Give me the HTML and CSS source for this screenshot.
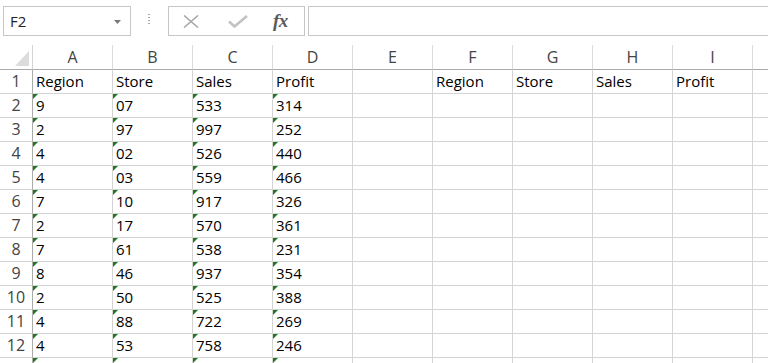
FILE: index.html
```html
<!DOCTYPE html>
<html>
<head>
<meta charset="utf-8">
<link rel="stylesheet" href="styles.css">
</head>
<body>
<div class="toolbar">
  <div class="namebox">
    <span class="name">F2</span>
    <svg class="dd" width="7" height="4" viewBox="0 0 7 4"><polygon points="0,0 7,0 3.5,4" fill="#7a7a7a"/></svg>
  </div>
  <div class="handle"></div>
  <div class="fxbox">
    <svg class="ico-x" width="16" height="13" viewBox="0 0 16 13"><path d="M1 0.5 L15 12.5 M15 0.5 L1 12.5" stroke="#a9a9a9" stroke-width="1.6" fill="none"/></svg>
    <svg class="ico-ok" width="20" height="13" viewBox="0 0 20 13"><path d="M1 6.5 L6.5 11.5 L19 1" stroke="#c2c2c2" stroke-width="2.6" fill="none"/></svg>
    <span class="fx">fx</span>
  </div>
  <div class="formula"></div>
</div>
<div class="sheet" id="sheet">
  <div class="corner"><svg width="14" height="15" viewBox="0 0 14 15"><polygon points="14,0 14,15 0,15" fill="#dcdcdc"/></svg></div>
  <div class="ch">A</div><div class="ch">B</div><div class="ch">C</div><div class="ch">D</div><div class="ch">E</div><div class="ch">F</div><div class="ch">G</div><div class="ch">H</div><div class="ch">I</div><div class="ch"></div>

  <div class="rh">1</div><div class="c">Region</div><div class="c">Store</div><div class="c">Sales</div><div class="c">Profit</div><div class="c"></div><div class="c">Region</div><div class="c">Store</div><div class="c">Sales</div><div class="c">Profit</div><div class="c"></div>

  <div class="rh">2</div><div class="c t">9</div><div class="c t">07</div><div class="c t">533</div><div class="c t">314</div><div class="c"></div><div class="c"></div><div class="c"></div><div class="c"></div><div class="c"></div><div class="c"></div>
  <div class="rh">3</div><div class="c t">2</div><div class="c t">97</div><div class="c t">997</div><div class="c t">252</div><div class="c"></div><div class="c"></div><div class="c"></div><div class="c"></div><div class="c"></div><div class="c"></div>
  <div class="rh">4</div><div class="c t">4</div><div class="c t">02</div><div class="c t">526</div><div class="c t">440</div><div class="c"></div><div class="c"></div><div class="c"></div><div class="c"></div><div class="c"></div><div class="c"></div>
  <div class="rh">5</div><div class="c t">4</div><div class="c t">03</div><div class="c t">559</div><div class="c t">466</div><div class="c"></div><div class="c"></div><div class="c"></div><div class="c"></div><div class="c"></div><div class="c"></div>
  <div class="rh">6</div><div class="c t">7</div><div class="c t">10</div><div class="c t">917</div><div class="c t">326</div><div class="c"></div><div class="c"></div><div class="c"></div><div class="c"></div><div class="c"></div><div class="c"></div>
  <div class="rh">7</div><div class="c t">2</div><div class="c t">17</div><div class="c t">570</div><div class="c t">361</div><div class="c"></div><div class="c"></div><div class="c"></div><div class="c"></div><div class="c"></div><div class="c"></div>
  <div class="rh">8</div><div class="c t">7</div><div class="c t">61</div><div class="c t">538</div><div class="c t">231</div><div class="c"></div><div class="c"></div><div class="c"></div><div class="c"></div><div class="c"></div><div class="c"></div>
  <div class="rh">9</div><div class="c t">8</div><div class="c t">46</div><div class="c t">937</div><div class="c t">354</div><div class="c"></div><div class="c"></div><div class="c"></div><div class="c"></div><div class="c"></div><div class="c"></div>
  <div class="rh">10</div><div class="c t">2</div><div class="c t">50</div><div class="c t">525</div><div class="c t">388</div><div class="c"></div><div class="c"></div><div class="c"></div><div class="c"></div><div class="c"></div><div class="c"></div>
  <div class="rh">11</div><div class="c t">4</div><div class="c t">88</div><div class="c t">722</div><div class="c t">269</div><div class="c"></div><div class="c"></div><div class="c"></div><div class="c"></div><div class="c"></div><div class="c"></div>
  <div class="rh">12</div><div class="c t">4</div><div class="c t">53</div><div class="c t">758</div><div class="c t">246</div><div class="c"></div><div class="c"></div><div class="c"></div><div class="c"></div><div class="c"></div><div class="c"></div>
  <div class="rh"></div><div class="c t"></div><div class="c t"></div><div class="c t"></div><div class="c t"></div><div class="c"></div><div class="c"></div><div class="c"></div><div class="c"></div><div class="c"></div><div class="c"></div>
</div>
</body>
</html>
```

FILE: styles.css
```css
html, body {
  margin: 0;
  padding: 0;
  background: #fff;
  overflow: hidden;
  width: 768px;
  height: 363px;
}
body {
  font-family: "Open Sans", "DejaVu Sans", sans-serif;
}
.toolbar {
  height: 45px;
  box-sizing: border-box;
  padding-top: 6px;
  display: flex;
  align-items: flex-start;
}
.namebox {
  margin-left: 3px;
  width: 128px;
  height: 30px;
  box-sizing: border-box;
  border: 1px solid #c6c6c6;
  display: flex;
  align-items: center;
  justify-content: space-between;
  padding: 0 9px 0 6px;
}
.name {
  font-size: 15px;
  color: #222;
  line-height: 28px;
}
.dd {
  display: block;
  margin-top: 1px;
}
.handle {
  margin-left: 17px;
  margin-top: 8px;
  width: 2px;
  height: 12px;
  background: repeating-linear-gradient(to bottom, #a8a8a8 0 1px, transparent 1px 3px);
}
.fxbox {
  margin-left: 18px;
  width: 137px;
  height: 30px;
  box-sizing: border-box;
  border: 1px solid #c6c6c6;
  display: flex;
  align-items: center;
  padding-left: 14px;
}
.ico-x {
  display: block;
  margin-top: 1px;
}
.ico-ok {
  display: block;
  margin-left: 29px;
}
.fx {
  margin-left: 25px;
  font-family: "Liberation Serif", "DejaVu Serif", serif;
  font-style: italic;
  font-weight: bold;
  font-size: 19px;
  color: #5a5a5a;
  line-height: 28px;
  letter-spacing: -0.5px;
}
.formula {
  margin-left: 3px;
  flex: 1;
  height: 30px;
  box-sizing: border-box;
  border: 1px solid #c6c6c6;
  border-right: none;
}
.sheet {
  display: grid;
  grid-template-columns: 33px repeat(10, 80px);
  grid-template-rows: 25px;
  grid-auto-rows: 24px;
  height: 318px;
  width: 768px;
  overflow: hidden;
}
.sheet > div {
  box-sizing: border-box;
  border-right: 1px solid #d4d4d4;
  border-bottom: 1px solid #d4d4d4;
  overflow: hidden;
  white-space: nowrap;
}
.corner {
  display: flex;
  justify-content: flex-end;
  align-items: flex-end;
  padding: 0 3px 3px 0;
}
.corner svg { display: block; }
.sheet > .corner {
  border-bottom-color: #ababab;
  border-right-color: #d4d4d4;
}
.sheet > .ch {
  border-bottom-color: #ababab;
  border-right-color: #dadada;
  text-align: center;
  font-size: 16px;
  line-height: 24px;
  color: #444;
}
.sheet > .rh {
  border-right-color: #ababab;
  text-align: center;
  font-size: 16px;
  line-height: 23px;
  color: #444;
}
.c {
  position: relative;
  font-size: 15px;
  line-height: 23px;
  color: #000;
  padding-left: 3px;
}
.t::before {
  content: "";
  position: absolute;
  left: 0;
  top: 0;
  width: 0;
  height: 0;
  border-top: 5px solid #1e7b1e;
  border-right: 5px solid transparent;
}
```
